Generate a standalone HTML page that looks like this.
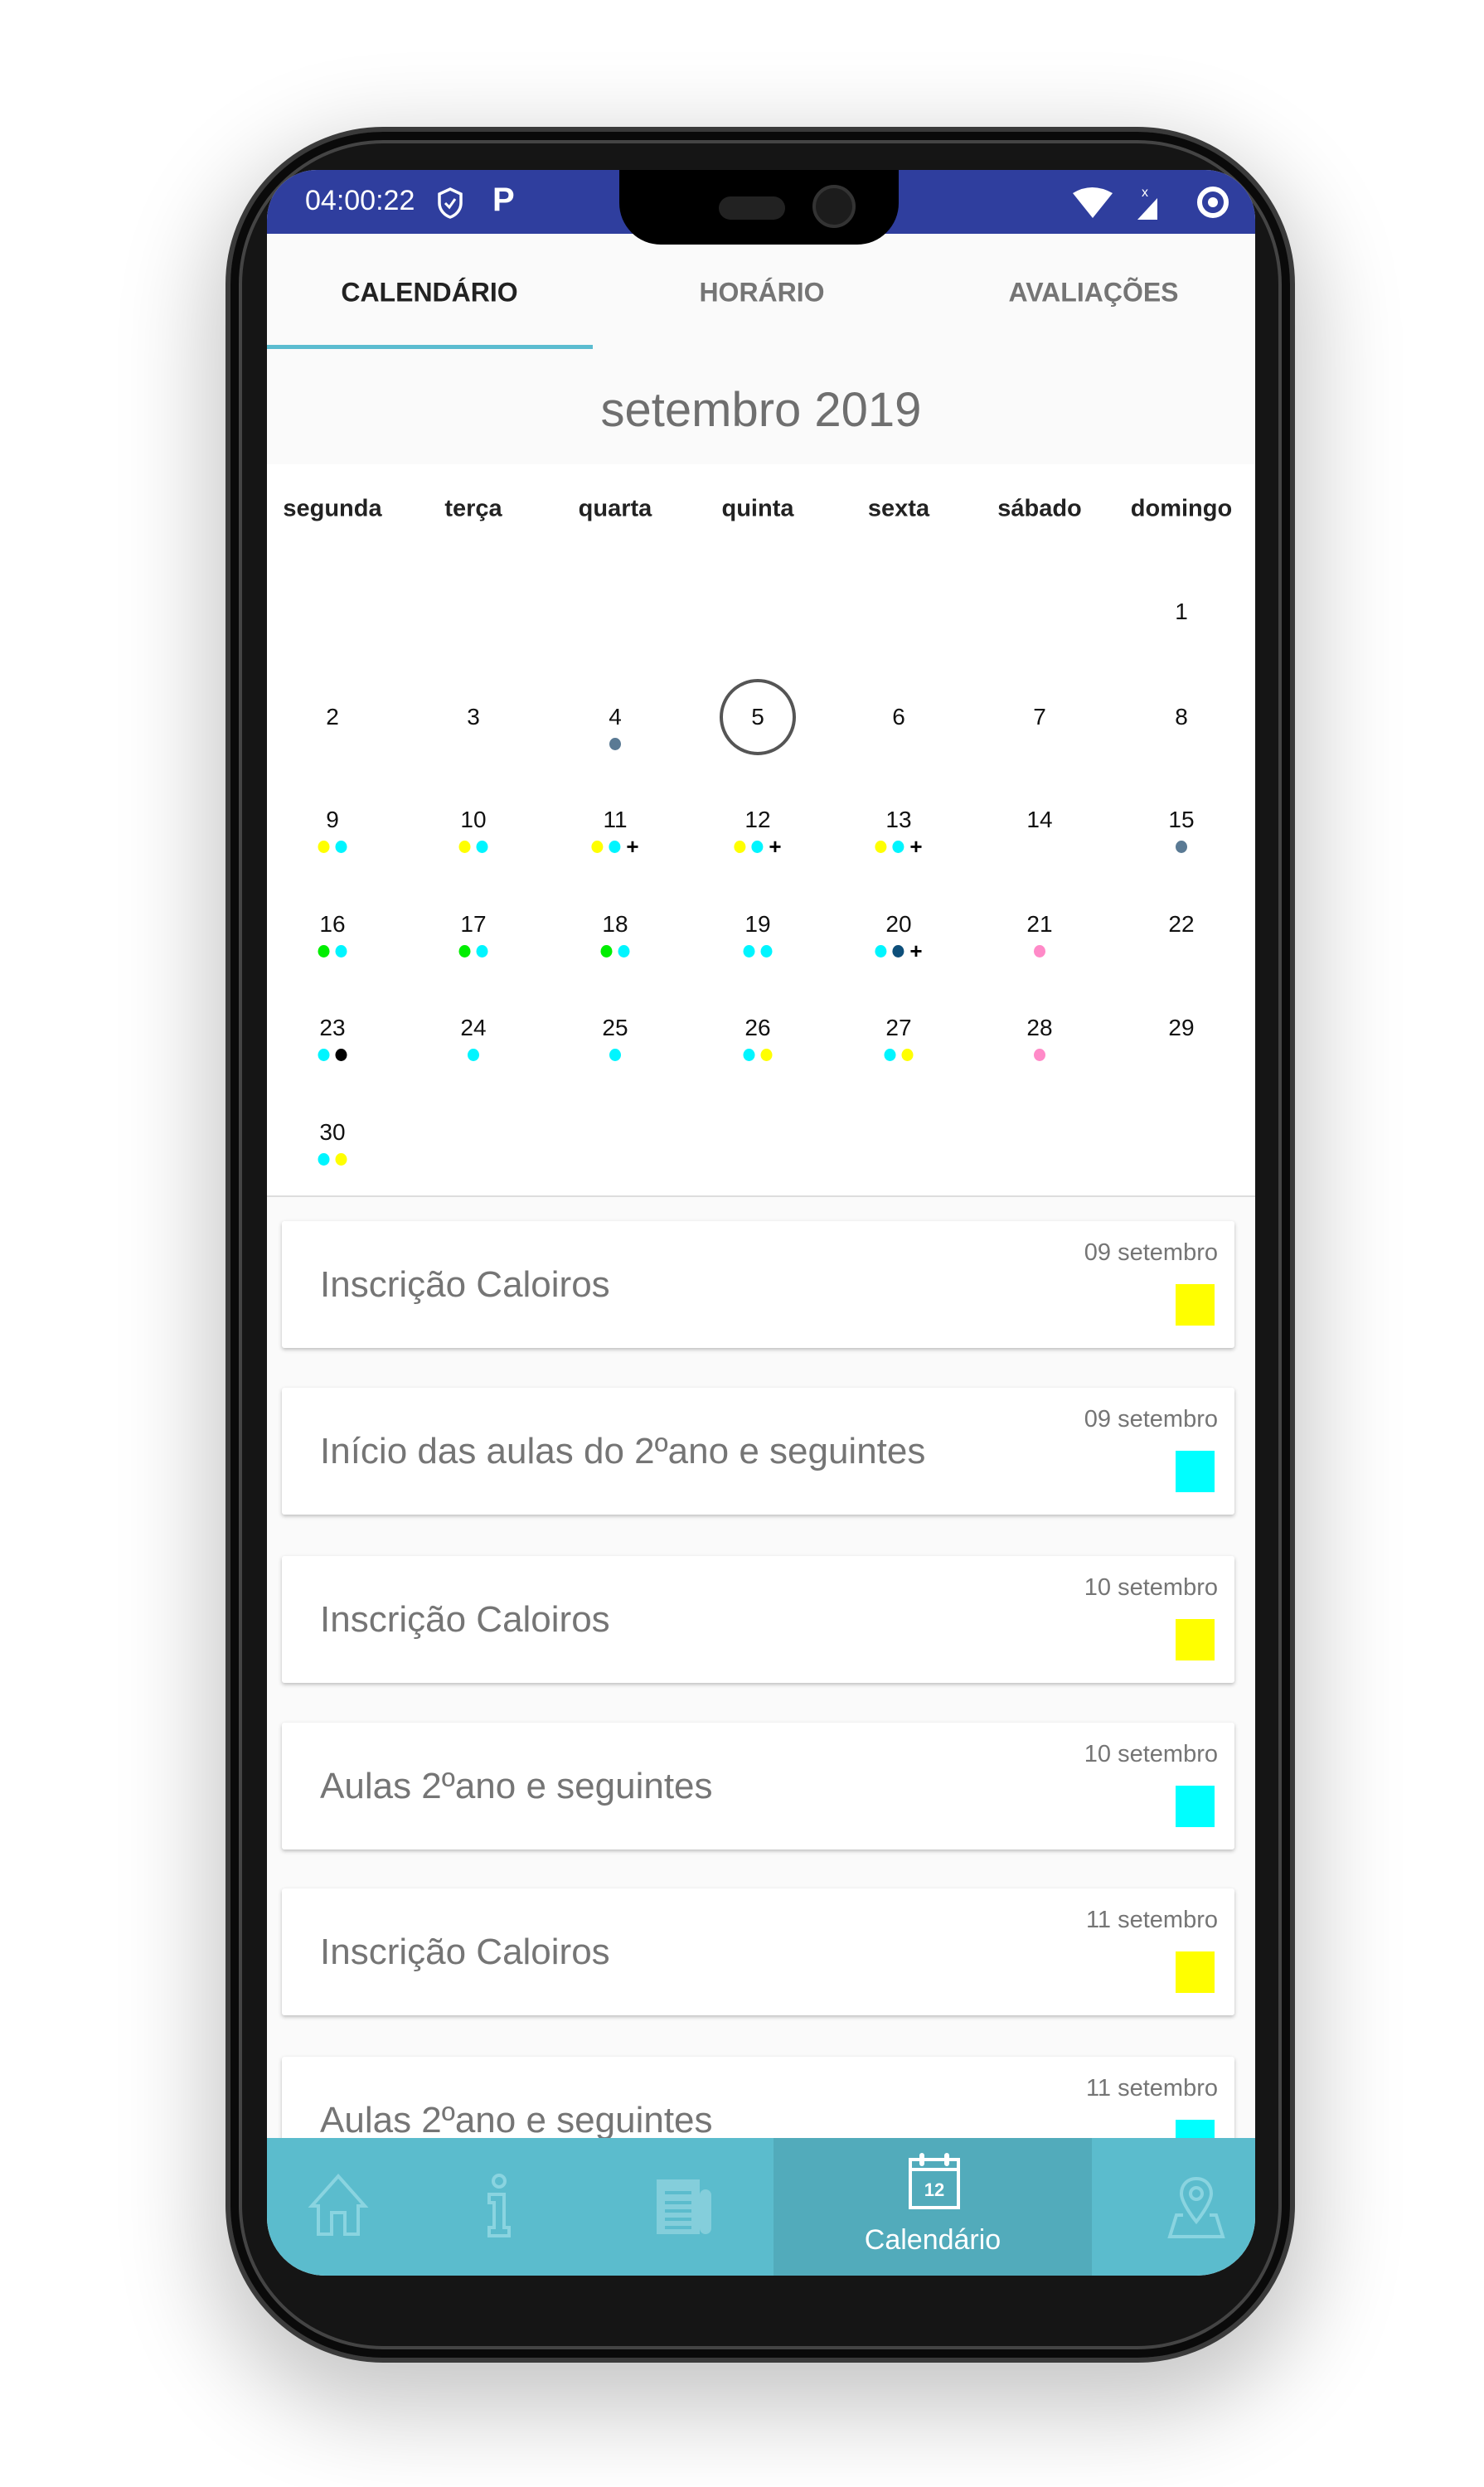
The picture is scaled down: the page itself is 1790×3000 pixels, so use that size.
<!DOCTYPE html>
<html><head><meta charset="utf-8"><style>
*{margin:0;padding:0;box-sizing:border-box}
body{width:1790px;height:3000px;background:#fff;position:relative;overflow:hidden;font-family:"Liberation Sans",sans-serif}
.abs{position:absolute}
.phone{left:272px;top:153px;width:1290px;height:2697px;border-radius:190px;background:#151515;border:6px solid #3a3a3a;box-shadow:inset 0 0 0 10px #0a0a0a, inset 0 0 0 14px #444, 0 40px 110px 20px rgba(0,0,0,0.22)}
.screen{left:322px;top:205px;width:1192px;height:2540px;background:#fff;border-radius:60px 60px 70px 70px;overflow:hidden}
.status{left:0;top:0;width:1192px;height:77px;background:#2f3e9e}
.notch{left:425px;top:-10px;width:337px;height:100px;background:#000;border-radius:0 0 50px 50px}
.tabs{left:0;top:77px;width:1192px;height:278px;background:#fafafa}
.tab{top:148px;font-size:32px;font-weight:bold;width:400px;text-align:center;transform:translateY(-50%)}
.wd{top:614px;font-size:29px;font-weight:bold;color:#222;width:170px;text-align:center;transform:translate(-50%,-50%)}
.num{font-size:28px;color:#111;width:80px;text-align:center;transform:translate(-50%,-50%)}
.dots{display:flex;gap:7px;align-items:center;transform:translateX(-50%);height:16px}
.d{width:14px;height:15px;border-radius:50%}
.p{font-size:26px;font-weight:bold;color:#000;line-height:16px}
.card{left:18px;width:1149px;height:153px;background:#fff;box-shadow:0 2px 5px rgba(0,0,0,0.25);border-radius:3px}
.ct{left:46px;top:52px;font-size:44px;color:#757575}
.cd{right:20px;top:22px;font-size:29px;color:#757575}
.sq{right:24px;top:76px;width:47px;height:50px}
</style></head><body>
<div class="abs phone"></div>
<div class="abs screen">
 <div class="abs status"></div>
 <div class="abs" style="left:46px;top:18px;font-size:34px;color:#fff">04:00:22</div>
 <svg class="abs" style="left:205px;top:20px" width="32" height="40" viewBox="0 0 32 40"><path d="M16 3 L29 9 V20 C29 29 22 35 16 37 C10 35 3 29 3 20 V9 Z" fill="none" stroke="#fff" stroke-width="3.5"/><path d="M10 20 L15 25 L22 15" fill="none" stroke="#fff" stroke-width="3"/></svg>
 <div class="abs" style="left:272px;top:14px;font-size:40px;font-weight:bold;color:#fff">P</div>
 <svg class="abs" style="left:970px;top:18px" width="130" height="44" viewBox="0 0 130 44"><path d="M2 10 Q25 -4 50 10 L26 40 Z" fill="#fff"/><path d="M80 42 L104 16 V42 Z" fill="#fff"/><text x="85" y="14" font-size="16" fill="#fff" font-family="Liberation Sans">x</text></svg>
 <svg class="abs" style="left:1120px;top:18px" width="42" height="42"><circle cx="21" cy="21" r="16" fill="none" stroke="#fff" stroke-width="6"/><circle cx="21" cy="21" r="6" fill="#fff"/></svg>
 <div class="abs tabs"></div>
 <div class="abs notch"><div class="abs" style="left:120px;top:42px;width:80px;height:28px;border-radius:14px;background:#222"></div><div class="abs" style="left:233px;top:28px;width:52px;height:52px;border-radius:50%;background:#1c1c1c;border:4px solid #333"></div></div>
 <div class="abs tab" style="left:-4px;color:#222">CALENDÁRIO</div>
 <div class="abs tab" style="left:397px;color:#757575">HORÁRIO</div>
 <div class="abs tab" style="left:797px;color:#757575">AVALIAÇÕES</div>
 <div class="abs" style="left:0;top:211px;width:393px;height:5px;background:#5bbcd0"></div>
 <div class="abs" style="left:0;top:258px;width:1192px;text-align:center;font-size:58px;color:#6f6f6f;line-height:64px">setembro 2019</div>
</div>
<div id="cal"></div>
<div class="abs" style="left:322px;top:1442px;width:1192px;height:2px;background:#ddd"></div>
<div class="abs" style="left:322px;top:1444px;width:1192px;height:1135px;background:#fafafa;overflow:hidden">
 <div class="abs card" style="top:29px"><div class="abs ct">Inscrição Caloiros</div><div class="abs cd">09 setembro</div><div class="abs sq" style="background:#ffff00"></div></div>
 <div class="abs card" style="top:230px"><div class="abs ct">Início das aulas do 2ºano e seguintes</div><div class="abs cd">09 setembro</div><div class="abs sq" style="background:#00ffff"></div></div>
 <div class="abs card" style="top:433px"><div class="abs ct">Inscrição Caloiros</div><div class="abs cd">10 setembro</div><div class="abs sq" style="background:#ffff00"></div></div>
 <div class="abs card" style="top:634px"><div class="abs ct">Aulas 2ºano e seguintes</div><div class="abs cd">10 setembro</div><div class="abs sq" style="background:#00ffff"></div></div>
 <div class="abs card" style="top:834px"><div class="abs ct">Inscrição Caloiros</div><div class="abs cd">11 setembro</div><div class="abs sq" style="background:#ffff00"></div></div>
 <div class="abs card" style="top:1037px"><div class="abs ct">Aulas 2ºano e seguintes</div><div class="abs cd">11 setembro</div><div class="abs sq" style="background:#00ffff"></div></div>
</div>
<div class="abs" style="left:322px;top:2579px;width:1192px;height:166px;background:#5bbccd;border-radius:0 0 70px 70px;overflow:hidden">
 <div class="abs" style="left:611px;top:0;width:384px;height:166px;background:#52abbb"></div>
 <svg class="abs" style="left:48px;top:42px" width="76" height="78" viewBox="0 0 76 78"><path d="M38 4 L70 40 H62 V74 H46 V48 H30 V74 H14 V40 H6 Z" fill="none" stroke="#8ad4e0" stroke-width="4"/></svg>
 <svg class="abs" style="left:258px;top:42px" width="44" height="80" viewBox="0 0 44 80"><circle cx="22" cy="10" r="7" fill="none" stroke="#8ad4e0" stroke-width="4"/><path d="M10 26 H28 V66 H34 V76 H10 V66 H16 V36 H10 Z" fill="none" stroke="#8ad4e0" stroke-width="4"/></svg>
 <svg class="abs" style="left:468px;top:48px" width="72" height="72" viewBox="0 0 72 72"><rect x="2" y="2" width="52" height="66" fill="#84cedb"/><rect x="54" y="14" width="14" height="54" rx="7" fill="#84cedb"/><path d="M12 18H44M12 30H44M12 40H44M12 50H44M12 60H44" stroke="#5bbccd" stroke-width="4"/></svg>
 <svg class="abs" style="left:773px;top:16px" width="64" height="72" viewBox="0 0 64 72"><rect x="3" y="10" width="58" height="58" fill="none" stroke="#fff" stroke-width="4"/><path d="M3 22H61" stroke="#fff" stroke-width="4"/><rect x="14" y="2" width="6" height="16" rx="3" fill="#fff"/><rect x="44" y="2" width="6" height="16" rx="3" fill="#fff"/><text x="32" y="54" font-size="22" fill="#fff" text-anchor="middle" font-family="Liberation Sans" font-weight="bold">12</text></svg>
 <div class="abs" style="left:611px;top:104px;width:384px;text-align:center;color:#fff;font-size:34px">Calendário</div>
 <svg class="abs" style="left:1085px;top:45px" width="72" height="78" viewBox="0 0 72 78"><path d="M36 4 C24 4 18 13 18 22 C18 34 36 56 36 56 C36 56 54 34 54 22 C54 13 48 4 36 4 Z" fill="none" stroke="#8ad4e0" stroke-width="4"/><circle cx="36" cy="22" r="7" fill="none" stroke="#8ad4e0" stroke-width="4"/><path d="M20 48 H12 L4 74 H68 L60 48 H52" fill="none" stroke="#8ad4e0" stroke-width="4"/></svg>
</div>
<script>
var cx=[401,571,742,914,1084,1254,1425],ry=[738,865,989,1115,1240,1366];
var names=["segunda","terça","quarta","quinta","sexta","sábado","domingo"];
var h="";
names.forEach(function(n,i){h+='<div class="abs wd" style="left:'+cx[i]+'px">'+n+'</div>';});
var Y="#ffff00",C="#00f5ff",G="#00ee00",S="#5a7a94",N="#0d4f7a",P="#ff8ac8",K="#000";
var dots={4:[S],9:[Y,C],10:[Y,C],11:[Y,C,"+"],12:[Y,C,"+"],13:[Y,C,"+"],15:[S],16:[G,C],17:[G,C],18:[G,C],19:[C,C],20:[C,N,"+"],21:[P],23:[C,K],24:[C],25:[C],26:[C,Y],27:[C,Y],28:[P],30:[C,Y]};
for(var d=1;d<=30;d++){var idx=d+5;var r=Math.floor(idx/7),c=idx%7;
h+='<div class="abs num" style="left:'+cx[c]+'px;top:'+ry[r]+'px">'+d+'</div>';
if(dots[d]){h+='<div class="abs dots" style="left:'+cx[c]+'px;top:'+(ry[r]+24)+'px">';dots[d].forEach(function(x){h+=x=="+"?'<span class="p">+</span>':'<span class="d" style="background:'+x+'"></span>';});h+='</div>';}}
h+='<div class="abs" style="left:'+(914-46)+'px;top:'+(865-46)+'px;width:92px;height:92px;border-radius:50%;border:4px solid #555"></div>';
document.getElementById("cal").innerHTML=h;
</script>
</body></html>
